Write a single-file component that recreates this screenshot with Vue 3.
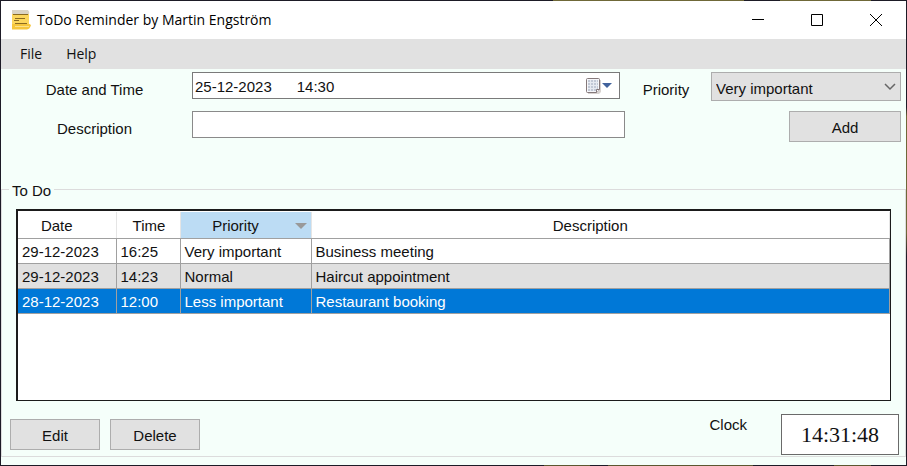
<script setup>
import { ref } from 'vue'

const when = ref('25-12-2023\u00a0\u00a0\u00a0\u00a0\u00a0\u00a014:30')
const priority = ref('Very important')
const description = ref('')
const selected = ref(2)
const priorities = ['Very important', 'Important', 'Normal', 'Less important']
const items = [
  { date: '29-12-2023', time: '16:25', priority: 'Very important', text: 'Business meeting' },
  { date: '29-12-2023', time: '14:23', priority: 'Normal', text: 'Haircut appointment' },
  { date: '28-12-2023', time: '12:00', priority: 'Less important', text: 'Restaurant booking' },
]
</script>

<template>
  <div class="window">
    <header class="titlebar">
      <svg class="app-icon" width="20" height="20" viewBox="0 0 20 20" aria-hidden="true">
        <path d="M1 3h17v12H1z" fill="#fbd65c" />
        <path d="M1 0h16q2 2 1 4H1z" fill="#d9d3c4" />
        <path d="M1 14h17.500l1.500 1q-1 4-4 4.500H1z" fill="#f6c63c" />
        <path d="M4 16.500h14" stroke="#fbe28a" />
        <path d="M2 4.500h15M4 8.500h10M3 10.500h5M4 13.500h12" fill="none" stroke="#8a6a20" />
      </svg>
      <h1>ToDo Reminder by Martin Engström</h1>
      <div class="controls">
        <button type="button" aria-label="Minimize">
          <svg width="12" height="12" viewBox="0 0 12 12"><path d="M0 5.500h12" stroke="#000" /></svg>
        </button>
        <button type="button" aria-label="Maximize">
          <svg width="12" height="12" viewBox="0 0 12 12"><path d="M.5.500h11v11H.5z" fill="none" stroke="#000" /></svg>
        </button>
        <button type="button" aria-label="Close">
          <svg width="12" height="12" viewBox="0 0 12 12"><path d="M0 0l12 12M12 0L0 12" stroke="#000" /></svg>
        </button>
      </div>
    </header>

    <nav class="menu">
      <button type="button">File</button>
      <button type="button">Help</button>
    </nav>

    <form class="entry" @submit.prevent>
      <label for="when">Date and Time</label>
      <div class="picker">
        <input id="when" v-model="when" type="text" />
        <button type="button" aria-label="Open calendar">
          <svg width="28" height="18" viewBox="0 0 28 18">
            <path d="M3 3h13v12l-2 2H3z" fill="#d8d3d1" />
            <path d="M2.500 1.500h11a1 1 0 0 1 1 1v10l-3 3h-9a1 1 0 0 1-1-1v-12a1 1 0 0 1 1-1z" fill="#f6f7fa" stroke="#85797a" />
            <path d="M3 3h10v9l-2 2H3z" fill="#c2c9d6" />
            <path d="M3 5.500h10M3 8.500h10M3 11.500h8M5.500 3v11M8.500 3v11M11.500 3v9" stroke="#e6eaf1" />
            <path d="M11.500 15.500v-3h3" fill="#fff" stroke="#85797a" />
            <path d="M17 6h10l-5 5z" fill="#41629c" />
          </svg>
        </button>
      </div>
      <label for="priority">Priority</label>
      <div class="select">
        <select id="priority" v-model="priority">
          <option v-for="p in priorities" :key="p">{{ p }}</option>
        </select>
        <svg width="12" height="8" viewBox="0 0 12 8" aria-hidden="true">
          <path d="M1 1l5 5 5-5" fill="none" stroke="#666" stroke-width="1.500" />
        </svg>
      </div>
      <label for="description">Description</label>
      <input id="description" v-model="description" class="description" type="text" />
      <button class="button add" type="submit">Add</button>
    </form>

    <fieldset class="todo">
      <legend>To Do</legend>
      <div class="list">
        <table>
          <colgroup>
            <col class="c-date" /><col class="c-time" /><col class="c-priority" /><col />
          </colgroup>
          <thead>
            <tr>
              <th>Date</th>
              <th>Time</th>
              <th class="sorted">
                <div>
                  <span>Priority</span>
                  <svg width="12" height="6" viewBox="0 0 12 6" aria-hidden="true"><path d="M0 0h12L6 6z" fill="#999" /></svg>
                </div>
              </th>
              <th>Description</th>
            </tr>
          </thead>
          <tbody>
            <tr v-for="(item, i) in items" :key="i" :class="{ selected: i === selected }" @click="selected = i">
              <td>{{ item.date }}</td>
              <td>{{ item.time }}</td>
              <td>{{ item.priority }}</td>
              <td>{{ item.text }}</td>
            </tr>
          </tbody>
        </table>
      </div>
      <div class="footer">
        <button class="button" type="button">Edit</button>
        <button class="button" type="button">Delete</button>
        <label for="clock">Clock</label>
        <output id="clock">14:31:48</output>
      </div>
    </fieldset>
  </div>
</template>

<style>
body {
  margin: 0;
  background: #f5fffa;
}
</style>

<style scoped>
* {
  box-sizing: border-box;
}
.window {
  display: flex;
  flex-direction: column;
  min-height: 100vh;
  border: 1px solid transparent;
  background:
    linear-gradient(#f5fffa, #f5fffa) padding-box,
    linear-gradient(90deg, transparent 61%, #6f6838 61% 82%, transparent 82% 86%, #6f6838 86% 96%, transparent 96%) top / 100% 1px no-repeat border-box,
    linear-gradient(transparent 23%, #6f6838 25% 50%, transparent 55%) right / 1px 100% no-repeat border-box,
    linear-gradient(90deg, transparent 60%, #5c5730 60% 65%, transparent 65% 67%, #5c5730 67% 83%, transparent 83% 92%, #5c5730 92% 96%, transparent 96%) bottom / 100% 1px no-repeat border-box,
    linear-gradient(#1d1b26, #1d1b26) border-box;
  color: #111;
  font: 15px/18px "Liberation Sans", Arial, sans-serif;
}
button,
input,
select {
  margin: 0;
  padding: 0;
  border: 0;
  border-radius: 0;
  background: none;
  color: inherit;
  font: inherit;
}
svg {
  display: block;
}
.titlebar {
  display: flex;
  align-items: center;
  height: 38px;
  padding: 0 1px 0 10px;
  background: #fff;
  color: #000;
}
h1 {
  flex: 1;
  margin: 0 0 0 6px;
  font: 14px/20px "Open Sans", "Noto Sans", sans-serif;
}
.controls {
  display: flex;
}
.controls button {
  display: grid;
  place-items: center;
  width: 59px;
  height: 38px;
}
.menu {
  display: flex;
  gap: 8px;
  height: 30px;
  padding-left: 11px;
  background: #e1e1e1;
}
.menu button {
  padding: 0 8px;
  font: 14px/30px "Open Sans", "Noto Sans", sans-serif;
}
.entry {
  display: grid;
  grid-template-columns: 191px 1fr 86px 190px;
  row-gap: 10px;
  align-items: start;
  padding: 3px 5px 0 0;
}
.entry label {
  padding: 9px 4px 0 0;
  text-align: center;
}
.picker {
  display: flex;
  align-items: center;
  height: 27px;
  margin-right: 5px;
  padding: 0 6px 0 2px;
  border: 1px solid #7a7a7a;
  background: #fff;
}
.picker input {
  flex: 1;
  min-width: 0;
  height: 25px;
  padding-top: 2px;
}
.select {
  display: grid;
  align-items: center;
}
.select select,
.select svg {
  grid-area: 1 / 1;
}
.select select {
  appearance: none;
  height: 29px;
  padding: 4px 24px 0 4px;
  border: 1px solid #adadad;
  background: #e1e1e1;
}
.select svg {
  justify-self: end;
  margin-right: 5px;
  pointer-events: none;
}
.description {
  height: 27px;
  padding: 0 3px;
  border: 1px solid #8a8a8a;
  background: #fff;
}
.button {
  width: 90px;
  height: 31px;
  padding-top: 3px;
  border: 1px solid #adadad;
  background: #e1e1e1;
}
.add {
  grid-column: 4;
  justify-self: end;
  width: 112px;
}
.todo {
  min-width: 0;
  margin: 36px 0 7px;
  padding: 9px 14px 1px;
  border: 1px solid #dcdcdc;
}
legend {
  margin-left: -7px;
  padding: 4px 3px 0;
}
.list {
  min-height: 192px;
  padding-top: 1px;
  border: 2px solid #1b1b1b;
  border-right-width: 1px;
  border-bottom-width: 1px;
  background: #fff;
}
table {
  width: 100%;
  border-collapse: collapse;
  table-layout: fixed;
}
.c-date {
  width: 98px;
}
.c-time {
  width: 64px;
}
.c-priority {
  width: 131px;
}
th,
td {
  height: 25px;
  padding: 2px 4px 0;
  border-right: 1px solid #a0a0a0;
  border-bottom: 1px solid #a0a0a0;
  line-height: 18px;
}
th {
  height: 26px;
  padding-right: 24px;
  border-right-color: #e5e5e5;
  font-weight: normal;
}
th:nth-child(2) {
  padding-right: 2px;
}
td {
  text-align: left;
}
.sorted {
  padding-right: 4px;
  background: #bcdcf4;
}
.sorted div {
  display: flex;
  align-items: center;
}
.sorted span {
  flex: 1;
  padding-right: 8px;
}
tbody tr:nth-child(even) {
  background: #e0e0e0;
}
tbody tr.selected {
  background: #0078d7;
  color: #fff;
}
.footer {
  display: flex;
  align-items: flex-start;
  gap: 10px;
  margin: 13px -8px 0 -6px;
}
.footer .button {
  margin-top: 5px;
}
.footer label {
  margin: 2px 24px 0 auto;
}
output {
  width: 118px;
  height: 41px;
  border: 1px solid #6a6a6a;
  background: #fff;
  text-align: center;
  font: 22px/39px "Liberation Serif", "Times New Roman", serif;
}
</style>
